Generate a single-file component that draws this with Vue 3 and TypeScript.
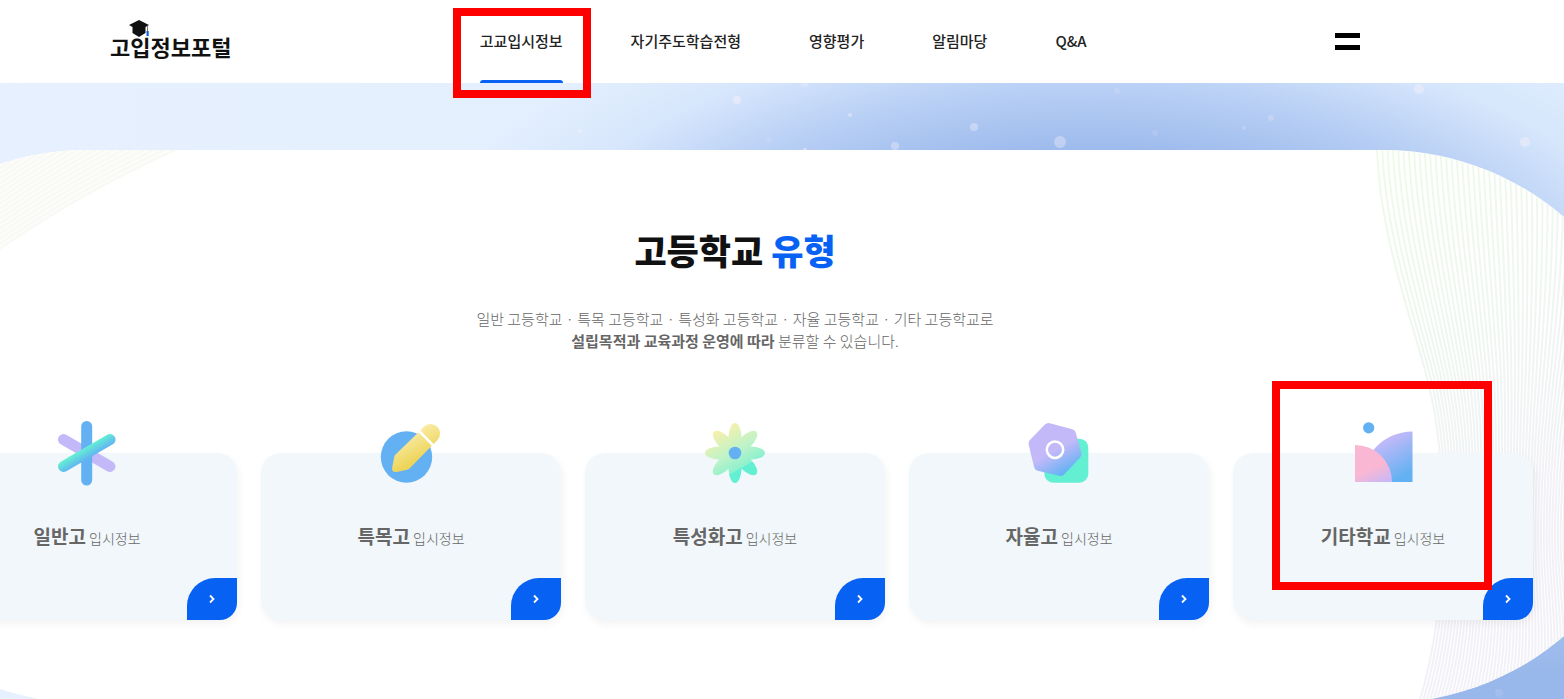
<script setup lang="ts">
interface MenuItem {
  label: string
  active: boolean
}

interface SchoolType {
  icon: 'star' | 'pencil' | 'flower' | 'gear' | 'shapes'
  name: string
  marked: boolean
}

const menu: MenuItem[] = [
  { label: '고교입시정보', active: true },
  { label: '자기주도학습전형', active: false },
  { label: '영향평가', active: false },
  { label: '알림마당', active: false },
  { label: 'Q&A', active: false },
]

const schools: SchoolType[] = [
  { icon: 'star', name: '일반고', marked: false },
  { icon: 'pencil', name: '특목고', marked: false },
  { icon: 'flower', name: '특성화고', marked: false },
  { icon: 'gear', name: '자율고', marked: false },
  { icon: 'shapes', name: '기타학교', marked: true },
]

const petals = [0, 45, 90, 135, 180, 225, 270, 315]

const bubbles = [
  { x: 805, y: 0, r: 4, o: 0.25 },
  { x: 737, y: 17, r: 4, o: 0.45 },
  { x: 850, y: 32, r: 2, o: 0.4 },
  { x: 895, y: 63, r: 4, o: 0.35 },
  { x: 805, y: 67, r: 2, o: 0.5 },
  { x: 769, y: 57, r: 3, o: 0.1 },
  { x: 974, y: 44, r: 4, o: 0.35 },
  { x: 1060, y: 59, r: 6, o: 0.35 },
  { x: 1117, y: 8, r: 3, o: 0.12 },
  { x: 1155, y: 50, r: 3, o: 0.12 },
  { x: 1244, y: 45, r: 2, o: 0.2 },
  { x: 1271, y: 35, r: 3, o: 0.2 },
  { x: 1419, y: 6, r: 5, o: 0.4 },
  { x: 1525, y: 59, r: 5, o: 0.4 },
  { x: 580, y: 48, r: 2, o: 0.4 },
  { x: 1499, y: 610, r: 4, o: 0.12 },
]

// Fine wave lines at the right end of the panel: wide at the top, pinched in the middle.
const rightWaves = Array.from({ length: 66 }, (_, i) => {
  const top = 17 + 5.3 * i
  const upper = 65 + 3.6 * i
  const slope = Math.max(0.28 - 0.011 * i, -0.15)
  const mid = 83 + 2.8 * i
  const end = 59 + 3.4 * i
  return (
    `M${top} 0C${top + 3} 80 ${upper - 70 * slope} 150 ${upper} 220` +
    `C${upper + 50 * slope} 270 ${mid} 320 ${mid} 390` +
    `C${mid} 440 ${end + 14} 510 ${end} 553`
  )
})

const leftWaves = Array.from({ length: 40 }, (_, i) => {
  const dy = -5 * i
  return `M150 ${127 + dy}Q270 ${38 + dy} 400 ${-15 + dy}`
})
</script>

<template>
  <div class="page">
    <header class="header">
      <div class="header-inner">
        <a class="logo" href="#">
          <svg class="cap" width="22" height="18" viewBox="0 0 22 18" aria-hidden="true">
            <path d="M11 0L21 5L17.500 7V13L11 17L4.500 13V7L1 5Z" fill="#111" />
            <path d="M19.500 5.500V11" stroke="#777" stroke-width="1" />
            <rect x="18.500" y="11" width="2.200" height="5" fill="#0762f4" />
          </svg>
          <span>고입정보포털</span>
        </a>
        <nav class="menu">
          <a
            v-for="item in menu"
            :key="item.label"
            href="#"
            class="menu-item"
            :class="{ active: item.active }"
          >
            {{ item.label }}
            <span v-if="item.active" class="frame frame-menu"></span>
          </a>
        </nav>
        <button class="burger" type="button" aria-label="메뉴">
          <span></span>
          <span></span>
        </button>
      </div>
    </header>

    <main class="hero">
      <svg class="bubbles" aria-hidden="true">
        <circle
          v-for="(b, i) in bubbles"
          :key="i"
          :cx="b.x"
          :cy="b.y"
          :r="b.r"
          :fill-opacity="b.o"
          fill="#fdf3fb"
        />
      </svg>

      <section class="panel">
        <div class="backdrop" aria-hidden="true">
          <svg class="waves-left" width="380" height="130" viewBox="0 0 380 130">
            <path d="M150 127Q270 38 400 -15H0V127Z" fill="#fcfdfb" />
            <path
              v-for="(d, i) in leftWaves"
              :key="i"
              :d="d"
              fill="none"
              stroke="#f8f9f4"
              stroke-width="2"
            />
          </svg>
          <svg class="waves-right" width="300" height="553" viewBox="0 0 300 553">
            <defs>
              <linearGradient
                id="wave"
                gradientUnits="userSpaceOnUse"
                x1="20"
                y1="0"
                x2="250"
                y2="300"
              >
                <stop offset="0" stop-color="#effae8" />
                <stop offset="0.500" stop-color="#eff6f0" />
                <stop offset="1" stop-color="#f2f1f7" />
              </linearGradient>
            </defs>
            <path
              v-for="(d, i) in rightWaves"
              :key="i"
              :d="d"
              fill="none"
              stroke="url(#wave)"
              stroke-width="2"
            />
          </svg>
        </div>

        <h1 class="title">고등학교 <em>유형</em></h1>
        <p class="lead">
          일반 고등학교 · 특목 고등학교 · 특성화 고등학교 · 자율 고등학교 · 기타 고등학교로<br />
          <strong>설립목적과 교육과정 운영에 따라</strong> 분류할 수 있습니다.
        </p>

        <ul class="cards">
          <li v-for="school in schools" :key="school.name">
            <a class="card" href="#">
              <svg class="icon" width="66" height="66" viewBox="0 0 66 66" aria-hidden="true">
                <template v-if="school.icon === 'star'">
                  <defs>
                    <linearGradient
                      id="bar"
                      gradientUnits="userSpaceOnUse"
                      x1="30"
                      y1="28"
                      x2="36"
                      y2="38"
                    >
                      <stop offset="0" stop-color="#63f1d3" />
                      <stop offset="1" stop-color="#62b2f2" />
                    </linearGradient>
                  </defs>
                  <g fill="none" stroke-width="11" stroke-linecap="round">
                    <path d="M9.500 19.500L56 46.500" stroke="#c3b9f9" />
                    <path d="M32.700 6.500V60" stroke="#63b1f2" />
                    <path d="M9.500 46.500L56 19.500" stroke="url(#bar)" />
                  </g>
                </template>

                <template v-else-if="school.icon === 'pencil'">
                  <defs>
                    <linearGradient
                      id="pencil"
                      gradientUnits="userSpaceOnUse"
                      x1="28"
                      y1="12"
                      x2="42"
                      y2="38"
                    >
                      <stop offset="0" stop-color="#fbeeac" />
                      <stop offset="1" stop-color="#edd55c" />
                    </linearGradient>
                  </defs>
                  <circle cx="28.500" cy="37" r="25.700" fill="#63b1f2" />
                  <path
                    d="M40.500 12.300L53.800 25.700L32 48Q31 49.300 29 49.800L18.500 52Q13.500 52.500 14.200 47.500L16.200 37Q16.500 35.500 17.800 34.200Z"
                    fill="url(#pencil)"
                  />
                  <path
                    d="M42.300 10.500L45.800 6.800A9.500 9.500 0 0 1 59.300 20.200L55.600 23.900Z"
                    fill="url(#pencil)"
                  />
                  <path d="M41.400 11.400L54.700 24.800" stroke="#fff" stroke-width="2.200" />
                </template>

                <template v-else-if="school.icon === 'flower'">
                  <defs>
                    <linearGradient
                      id="flower"
                      gradientUnits="userSpaceOnUse"
                      x1="16"
                      y1="8"
                      x2="42"
                      y2="54"
                    >
                      <stop offset="0" stop-color="#fbf0aa" />
                      <stop offset="0.550" stop-color="#bdf3c8" />
                      <stop offset="0.870" stop-color="#8cf1cd" />
                      <stop offset="0.880" stop-color="#63efd2" />
                    </linearGradient>
                    <clipPath id="petals">
                      <ellipse
                        v-for="angle in petals"
                        :key="angle"
                        cx="33"
                        cy="17.500"
                        rx="6.500"
                        ry="14.500"
                        :transform="`rotate(${angle} 33 33)`"
                      />
                      <circle cx="33" cy="33" r="14" />
                    </clipPath>
                  </defs>
                  <rect width="66" height="66" fill="url(#flower)" clip-path="url(#petals)" />
                  <circle cx="33" cy="33" r="6.300" fill="#63b1f2" />
                </template>

                <template v-else-if="school.icon === 'gear'">
                  <defs>
                    <linearGradient
                      id="gear"
                      gradientUnits="userSpaceOnUse"
                      x1="30"
                      y1="30"
                      x2="43"
                      y2="53"
                    >
                      <stop offset="0" stop-color="#c3b9f9" />
                      <stop offset="0.900" stop-color="#66b2f3" />
                    </linearGradient>
                  </defs>
                  <rect x="18.300" y="18.700" width="44" height="44" rx="9" fill="#63efd2" />
                  <path
                    d="M22.500 8L45 14L50.500 34L34.500 51L13 46L7.500 23.500Z"
                    fill="url(#gear)"
                    stroke="url(#gear)"
                    stroke-width="10"
                    stroke-linejoin="round"
                  />
                  <circle
                    cx="29"
                    cy="29.700"
                    r="8.200"
                    fill="none"
                    stroke="#fff"
                    stroke-width="2.500"
                  />
                </template>

                <template v-else>
                  <defs>
                    <linearGradient
                      id="leaf"
                      gradientUnits="userSpaceOnUse"
                      x1="34"
                      y1="20"
                      x2="54"
                      y2="56"
                    >
                      <stop offset="0" stop-color="#c3b9f9" />
                      <stop offset="1" stop-color="#63b1f2" />
                    </linearGradient>
                    <linearGradient
                      id="petal"
                      gradientUnits="userSpaceOnUse"
                      x1="18"
                      y1="46"
                      x2="28"
                      y2="66"
                    >
                      <stop offset="0.200" stop-color="#f9b7d3" />
                      <stop offset="1" stop-color="#c9b8f6" />
                    </linearGradient>
                  </defs>
                  <circle cx="18.700" cy="7.800" r="5.600" fill="#63b1f2" />
                  <path d="M62.500 11.500V62H12A50.500 50.500 0 0 1 62.500 11.500Z" fill="url(#leaf)" />
                  <path d="M5 25V62H42A37 37 0 0 0 5 25Z" fill="url(#petal)" />
                </template>
              </svg>

              <span class="label"><b>{{ school.name }}</b> 입시정보</span>

              <span class="go">
                <svg width="8" height="10" viewBox="0 0 8 10" aria-hidden="true">
                  <path d="M2 1.500L5.500 5L2 8.500" fill="none" stroke="#fff" stroke-width="1.800" />
                </svg>
              </span>
              <span v-if="school.marked" class="frame frame-card"></span>
            </a>
          </li>
        </ul>
      </section>
    </main>
  </div>
</template>

<style>
body {
  margin: 0;
}
</style>

<style scoped>
.page {
  display: flex;
  flex-direction: column;
  height: 100vh;
  overflow: hidden;
  background: #fff;
  font-family: 'Noto Sans CJK KR', sans-serif;
  color: #111;
}

a {
  color: inherit;
  text-decoration: none;
}

.header {
  position: relative;
  z-index: 2;
  flex: none;
  background: #fff;
  padding-right: 94px;
}

.header-inner {
  display: flex;
  align-items: center;
  justify-content: space-between;
  max-width: 1250px;
  height: 83px;
  margin: 0 auto;
}

.logo {
  position: relative;
  padding-top: 8px;
  font-size: 22px;
  line-height: 32px;
  font-weight: 700;
}

.cap {
  position: absolute;
  left: 18px;
  top: -2px;
}

.menu {
  display: flex;
  gap: 68px;
}

.menu-item {
  position: relative;
  padding-bottom: 2px;
  font-size: 15px;
  line-height: 81px;
  font-weight: 500;
  color: #222;
  white-space: nowrap;
}

.menu-item.active::after {
  content: '';
  position: absolute;
  left: 0;
  right: 0;
  bottom: 0;
  height: 3px;
  border-radius: 3px 3px 0 0;
  background: #0762f4;
}

.frame {
  position: absolute;
  z-index: 1;
  box-sizing: border-box;
  border: 8px solid #f00;
  pointer-events: none;
}

.frame-menu {
  inset: 8px -28px -15px -27px;
}

.burger {
  display: flex;
  flex-direction: column;
  gap: 7px;
  width: 25px;
  padding: 0;
  border: 0;
  background: none;
}

.burger span {
  height: 5px;
  background: #000;
}

.hero {
  position: relative;
  flex: 1 0 auto;
  padding: 67px 94px 40px 0;
  background:
    radial-gradient(
      ellipse 700px 330px at 1090px 218px,
      #7ba1e2 0%,
      #84a8e5 25%,
      rgba(155, 185, 236, 0.97) 46%,
      rgba(180, 204, 244, 0.85) 66%,
      rgba(206, 224, 250, 0.6) 82%,
      rgba(224, 238, 254, 0) 100%
    ),
    linear-gradient(180deg, rgba(143, 177, 232, 0) 25%, #98b7ea 90%) right / 400px 100% no-repeat,
    linear-gradient(90deg, #e6f0ff, #e1effe);
}

.bubbles {
  position: absolute;
  left: 0;
  top: 0;
  width: 100%;
  height: 100%;
}

.panel {
  position: relative;
  margin: 0 -190px;
  padding: 75px 0 83px;
  border-radius: 277px;
  background: #fff;
  text-align: center;
}

.backdrop {
  position: absolute;
  inset: 0;
  overflow: hidden;
  border-radius: inherit;
}

.waves-left {
  position: absolute;
  left: 0;
  top: 0;
}

.waves-right {
  position: absolute;
  right: 0;
  top: 0;
}

.title {
  position: relative;
  margin: 0 0 33px;
  font-size: 35px;
  line-height: 50px;
  font-weight: 900;
}

.title em {
  font-style: normal;
  color: #0762f4;
}

.lead {
  position: relative;
  margin: 0;
  font-size: 15px;
  line-height: 22px;
  font-weight: 300;
  color: #666;
}

.lead strong {
  font-weight: 700;
}

.cards {
  position: relative;
  display: flex;
  justify-content: center;
  gap: 24px;
  margin: 101px 0 0;
  padding: 0;
  list-style: none;
}

.card {
  position: relative;
  display: flex;
  align-items: center;
  justify-content: center;
  width: 300px;
  height: 167px;
  border-radius: 20px;
  background: #f1f7fa;
  box-shadow: 2px 4px 8px rgba(0, 0, 0, 0.05);
  color: #666;
}

.icon {
  position: absolute;
  left: 117px;
  top: -33px;
}

.label {
  font-size: 14px;
  line-height: 28px;
  font-weight: 300;
}

.label b {
  font-size: 19px;
  font-weight: 700;
}

.go {
  position: absolute;
  right: 0;
  bottom: 0;
  display: flex;
  align-items: center;
  justify-content: center;
  width: 50px;
  height: 42px;
  border-radius: 28px 0 17px;
  background: #0762f4;
}

.frame-card {
  left: 39px;
  right: 41px;
  top: -72px;
  bottom: 30px;
}
</style>
